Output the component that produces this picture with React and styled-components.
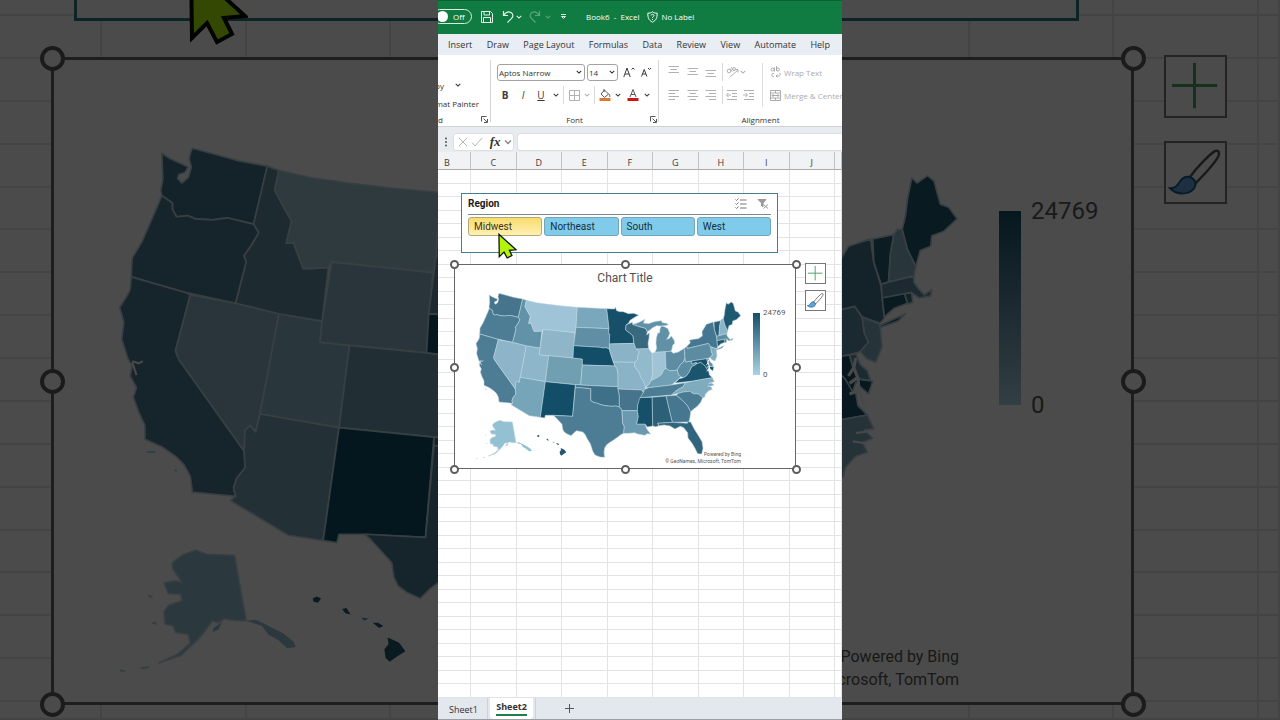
import React from "react";
import styled, { createGlobalStyle, ThemeProvider, css } from "styled-components";

const GlobalStyle = createGlobalStyle`
  *, *::before, *::after { box-sizing: border-box; }
  body { margin: 0; background: #4b4b4b; font-family: "Open Sans", "Noto Sans", sans-serif; color: #333; }
  button, input, select { font: inherit; color: inherit; margin: 0; padding: 0; border: 0; background: none; border-radius: 0; }
  svg { display: block; flex: none; }
`;

/* Sizes of the sheet objects: one set for the sheet, one for the enlarged backdrop. */
const regular = {
  line: 1, frameW: 342, frameH: 205, handle: 9, ring: 2,
  mapX: 5, mapY: 15, mapW: 280, title: 12, titleTop: 5,
  barX: 298, barY: 48, barW: 7, barH: 62, label: 8, labelGap: 3, labelLine: 10,
  credit: 5, creditLine: 7, creditRight: 54, creditBottom: 3,
  toolX: 350, toolY: -2, tool: 21, toolGap: 6, cursor: 19,
};
const enlarged = {
  line: 3, frameW: 1083, frameH: 648, handle: 25, ring: 4,
  mapX: 15, mapY: 46, mapW: 886, title: 38, titleTop: 13,
  barX: 945, barY: 151, barW: 22, barH: 194, label: 24, labelGap: 10, labelLine: 32,
  credit: 16, creditLine: 23, creditRight: 172, creditBottom: 11,
  toolX: 1110, toolY: -5, tool: 63, toolGap: 23, cursor: 60,
};

/* ---------- page ---------- */
const Page = styled.div`
  position: relative;
  display: flex;
  justify-content: center;
  min-height: 100vh;
  overflow: hidden;
`;
const Backdrop = styled.div`
  position: absolute;
  inset: 0;
  background: #fff;
  &::after { content: ""; position: absolute; inset: 0; background: rgba(0, 0, 0, 0.705); }
`;
const BackdropGrid = styled.div`
  display: grid;
  height: 100%;
  grid-template-columns: 102px repeat(8, 1fr) 21px;
  grid-template-rows: 16px repeat(16, 1fr) 18px;
`;
const BackdropCell = styled.div`
  border-right: 2px solid #e6e6e6;
  border-bottom: 2px solid #e6e6e6;
`;
const BackdropSlicer = styled.div`
  position: absolute;
  left: calc(50% - 566px);
  top: calc(50% - 528px);
  width: 1005px;
  height: 189px;
  border: 3px solid #2f7a86;
  background: #fff;
`;
const BackdropSpot = styled.div`
  position: absolute;
  left: calc(50% + ${(p) => p.$x}px);
  top: calc(50% + ${(p) => p.$y}px);
`;
const Window = styled.main`
  position: relative;
  display: flex;
  flex-direction: column;
  height: 100vh;
  aspect-ratio: 101 / 180;
  background: #fff;
  overflow: hidden;
`;

/* ---------- title bar ---------- */
const TitleBar = styled.header`
  display: flex;
  align-items: center;
  height: 34px;
  flex: none;
  padding-bottom: 2px;
  border-top: 1px solid #0b6132;
  background: #107c41;
  color: #fff;
  font-size: 8px;
  font-weight: 500;
  white-space: nowrap;
`;
const Toggle = styled.label`
  display: flex;
  align-items: center;
  gap: 5px;
  width: 40px;
  height: 15px;
  flex: none;
  margin-left: -6px;
  padding-left: 4px;
  border: 1px solid #d9ecdf;
  border-radius: 8px;
  input { appearance: none; width: 11px; height: 11px; border-radius: 50%; background: #fff; }
`;
const TitleButton = styled.button`
  display: flex;
  align-items: center;
  justify-content: center;
  width: ${(p) => p.$w}px;
  height: 20px;
  flex: none;
  color: #e2f2e8;
  opacity: ${(p) => (p.$dim ? 0.35 : 1)};
`;
const FileName = styled.h1`
  margin: 0 8px 0 11px;
  font-size: 8px;
  font-weight: 500;
  white-space: pre;
`;
const LabelButton = styled.button`
  display: flex;
  align-items: center;
  gap: 3px;
`;

/* ---------- ribbon ---------- */
const Tabs = styled.nav`
  display: flex;
  align-items: center;
  justify-content: space-between;
  height: 21px;
  flex: none;
  padding: 0 12px 0 10px;
  background: #e9edf4;
  font-size: 9px;
  white-space: nowrap;
`;
const Tab = styled.a`
  color: #333;
  text-decoration: none;
`;
const Ribbon = styled.section`
  display: flex;
  height: 72px;
  flex: none;
  border-bottom: 1px solid #cfd2d6;
  overflow: hidden;
  font-size: 8px;
`;
const Group = styled.div`
  display: flex;
  flex-direction: column;
  flex: none;
  width: ${(p) => p.$w}px;
  margin-top: 5px;
  margin-bottom: 4px;
  border-right: 1px solid #d4d4d4;
`;
const Controls = styled.div`
  display: flex;
  flex-direction: column;
  flex: none;
  height: 51px;
`;
const Row = styled.div`
  display: flex;
  align-items: center;
  flex: none;
  height: ${(p) => p.$h || 23}px;
  padding-left: ${(p) => p.$pad || 0}px;
`;
const GroupLabel = styled.div`
  position: relative;
  display: flex;
  justify-content: center;
  padding-top: 3px;
  line-height: 11px;
`;
const Launcher = styled.button`
  position: absolute;
  right: ${(p) => p.$r}px;
  top: 5px;
`;
const ClippedButton = styled.button`
  display: flex;
  justify-content: flex-end;
  width: ${(p) => p.$w}px;
  margin-right: 11px;
  white-space: nowrap;
`;
const ClippedLabel = styled.span`
  display: flex;
  justify-content: flex-end;
  width: 5px;
  margin-right: auto;
`;
const Tool = styled.button`
  display: flex;
  align-items: center;
  justify-content: center;
  flex: none;
  width: ${(p) => p.$w || 18}px;
  height: 18px;
  font-size: 10px;
  color: ${(p) => (p.$off ? "#b1b1b1" : "#3a3a3a")};
`;
const WideTool = styled.button`
  display: flex;
  align-items: center;
  gap: 3px;
  flex: none;
  margin-left: 4px;
  color: #ababab;
  white-space: nowrap;
`;
const Divider = styled.span`
  flex: none;
  width: 1px;
  height: 18px;
  margin: 0 2px;
  background: #d9d9d9;
`;
const AlignBody = styled.div`
  display: flex;
`;
const AlignPart = styled.div`
  display: flex;
  flex-direction: column;
  flex: none;
`;
const TallDivider = styled.span`
  width: 1px;
  height: 44px;
  margin: 3px 0 0 3px;
  background: #dcdcdc;
`;
const Picker = styled.span`
  position: relative;
  display: flex;
  align-items: center;
  width: ${(p) => p.$w}px;
  height: 17px;
  margin-right: 2px;
  border: 1px solid #a2a2a2;
  border-radius: 3px;
  select { appearance: none; width: 100%; height: 15px; padding-left: 1px; font-size: 8px; }
  svg { position: absolute; right: 2px; pointer-events: none; }
`;

/* ---------- formula bar ---------- */
const FormulaBar = styled.section`
  display: flex;
  align-items: center;
  height: 25px;
  flex: none;
  padding: 5px 0 1px 6px;
  background: #e8ebf0;
`;
const FormulaTools = styled.div`
  display: flex;
  align-items: center;
  justify-content: space-between;
  width: 61px;
  height: 18px;
  margin: 0 3px 0 5px;
  padding: 0 1px 0 4px;
  border: 1px solid #dcdfe4;
  border-radius: 3px;
  background: #fff;
`;
const FxButton = styled.button`
  padding-left: 3px;
  font: italic bold 13px "Liberation Serif", serif;
`;
const FormulaInput = styled.input`
  flex: 1;
  min-width: 0;
  height: 18px;
  border: 1px solid #dcdfe4;
  border-right: 0;
  border-radius: 3px 0 0 3px;
  background: #fff;
`;

/* ---------- sheet ---------- */
const SheetArea = styled.section`
  position: relative;
  flex: 1;
  min-height: 0;
`;
const Cells = styled.table`
  display: grid;
  height: 100%;
  grid-template-columns: 33px repeat(8, 1fr) 7px;
  grid-template-rows: 18px repeat(39, 1fr);
  thead, tbody, tr { display: contents; }
  th {
    overflow: hidden;
    padding: 4px 0 0;
    border-right: 1px solid #bfc1c3;
    border-bottom: 1px solid #a9abad;
    background: #f1f2f3;
    font-size: 9px;
    font-weight: 500;
    line-height: 13px;
    color: #3b3b3b;
  }
  th:first-child { padding-right: 14px; }
  td { padding: 0; border-right: 1px solid #e2e3e4; border-bottom: 1px solid #e2e3e4; }
`;
const Floating = styled.div`
  position: absolute;
  left: ${(p) => p.$x}px;
  top: ${(p) => p.$y}px;
`;
const Slicer = styled.section`
  width: 317px;
  height: 60px;
  padding: 4px 6px;
  border: 1px solid #43808f;
  background: #fff;
  font-family: Roboto, sans-serif;
  font-size: 10px;
`;
const SlicerHead = styled.div`
  display: flex;
  align-items: center;
  gap: 10px;
  height: 17px;
  margin-bottom: 2px;
  padding: 0 2px 5px 0;
  border-bottom: 1px solid #7a8a8a;
`;
const SlicerTitle = styled.h2`
  flex: 1;
  margin: 0;
  font-size: 10px;
  font-weight: 700;
  color: #1b1b1b;
`;
const SlicerItems = styled.div`
  display: grid;
  grid-template-columns: repeat(4, 1fr);
  gap: 2px;
`;
const SlicerItem = styled.button`
  height: 19px;
  padding-left: 5px;
  border: 1px solid #6fa5bd;
  border-radius: 3px;
  background: #80cbea;
  color: #14303c;
  text-align: left;
  ${(p) =>
    p.$active &&
    css`
      border-color: #b5a878;
      background: linear-gradient(#f9dc6c, #fff0b4);
      color: #3c3316;
    `}
`;

/* ---------- chart ---------- */
const Frame = styled.figure`
  position: relative;
  width: ${(p) => p.theme.frameW}px;
  height: ${(p) => p.theme.frameH}px;
  margin: 0;
  border: ${(p) => p.theme.line}px solid #666;
  background: #fff;
  font-family: Roboto, sans-serif;
`;
const ChartTitle = styled.figcaption`
  padding-top: ${(p) => p.theme.titleTop}px;
  font-size: ${(p) => p.theme.title}px;
  line-height: 16px;
  text-align: center;
  color: #505050;
`;
const MapPlace = styled.div`
  position: absolute;
  left: ${(p) => p.theme.mapX}px;
  top: ${(p) => p.theme.mapY}px;
  width: ${(p) => p.theme.mapW}px;
  svg { width: 100%; height: auto; }
`;
const Legend = styled.div`
  position: absolute;
  left: ${(p) => p.theme.barX}px;
  top: ${(p) => p.theme.barY}px;
  display: flex;
  gap: ${(p) => p.theme.labelGap}px;
  height: ${(p) => p.theme.barH}px;
  font-size: ${(p) => p.theme.label}px;
  line-height: ${(p) => p.theme.labelLine}px;
  color: #595959;
`;
const LegendBar = styled.div`
  width: ${(p) => p.theme.barW}px;
  background: linear-gradient(#154f68, #a9d3e6);
`;
const LegendLabels = styled.div`
  display: flex;
  flex-direction: column;
  justify-content: space-between;
  margin: -${(p) => p.theme.labelLine / 2}px 0;
`;
const Credit = styled.small`
  position: absolute;
  right: ${(p) => p.theme.creditRight}px;
  bottom: ${(p) => p.theme.creditBottom}px;
  font-size: ${(p) => p.theme.credit}px;
  line-height: ${(p) => p.theme.creditLine}px;
  text-align: right;
  color: #555;
`;
const Handles = styled.div`
  position: absolute;
  inset: -${(p) => Math.ceil(p.theme.line / 2)}px;
  pointer-events: none;
`;
const Handle = styled.span`
  position: absolute;
  left: ${(p) => p.$x}%;
  top: ${(p) => p.$y}%;
  width: ${(p) => p.theme.handle}px;
  height: ${(p) => p.theme.handle}px;
  margin: -${(p) => Math.floor(p.theme.handle / 2)}px;
  border: ${(p) => p.theme.ring}px solid #5c5c5c;
  border-radius: 50%;
  background: #fff;
`;
const ChartTools = styled.div`
  position: absolute;
  left: ${(p) => p.theme.toolX}px;
  top: ${(p) => p.theme.toolY}px;
  display: flex;
  flex-direction: column;
  gap: ${(p) => p.theme.toolGap}px;
`;
const ChartTool = styled.button`
  width: ${(p) => p.theme.tool}px;
  height: ${(p) => p.theme.tool}px;
  border: ${(p) => Math.min(p.theme.line, 2)}px solid #777;
  background: #fff;
  svg { width: 100%; height: 100%; }
`;
const CursorArt = styled.svg`
  width: ${(p) => p.theme.cursor}px;
  height: auto;
`;

/* ---------- sheet tabs ---------- */
const SheetBar = styled.nav`
  display: flex;
  align-items: stretch;
  height: 22px;
  flex: none;
  border-bottom: 1px solid #9b9ea2;
  background: #e3e7ee;
  font-size: 9px;
`;
const SheetTab = styled.button`
  width: 50px;
  padding: 2px 0 0 2px;
  border-right: 1px solid #cdd1d8;
`;
const ActiveTab = styled.button`
  width: 43px;
  margin: 0 2px;
  padding-bottom: 1px;
  border-radius: 0 0 4px 4px;
  background: #fff;
  font-weight: 700;
  span { display: inline-block; line-height: 14px; border-bottom: 2px solid #1d7f49; }
`;
const AddSheet = styled.button`
  display: flex;
  align-items: center;
  padding-left: 29px;
  border-left: 1px solid #cdd1d8;
`;

/* State outlines as [fill, points]. */
const states = [
  ["#45748c", "88,45 96,50 109,56 113,58 110,63 104,65 103,69 107,73 113,68 116,58 114,50 115,45 117,40 139,46 161,52 188,57 175,112 150,106 136,108 120,107 113,104 102,105 98,98 98,92 88,85 87,80 89,69"],
  ["#4d7d95", "88,85 98,92 98,98 102,105 113,104 120,107 136,108 150,106 175,112 180,120 173,132 166,142 168,148 158,187 111,177 59,162 60,144 69,129 80,104"],
  ["#4d7d95", "59,162 111,177 115,179 101,232 104,240 166,327 167,343 159,353 156,362 158,370 117,366 115,351 109,340 101,332 88,323 72,316 72,303 66,290 61,276 64,267 58,256 60,246 56,240 50,221 52,205 48,191 55,180 58,174"],
  ["#8db4c8", "115,179 158,187 199,197 191,240 181,292 177,309 172,303 167,307 166,327 104,240 101,232"],
  ["#8db6ca", "199,197 240,204 238,224 266,227 256,305 181,292 191,240"],
  ["#76a4b8", "181,292 256,305 241,412 208,407 153,374 158,370 156,362 159,353 167,343 166,327 167,307 172,303 177,309"],
  ["#6292a8", "188,57 199,61 195,80 203,95 211,109 206,130 213,130 222,154 233,154 246,153 240,204 199,197 158,187 168,148 166,142 173,132 180,120 175,112"],
  ["#a0c4d7", "199,61 230,68 265,73 308,78 352,82 348,142 345,158 249,148 246,153 233,154 222,154 213,130 206,130 211,109 203,95 195,80"],
  ["#8fb5c9", "249,148 345,158 339,234 266,227 238,224 240,204"],
  ["#709fb2", "266,227 339,234 367,237 367,255 362,315 346,314 256,305"],
  ["#124e68", "256,305 346,314 338,409 280,406 256,406 254,414 241,412"],
  ["#7aa7bb", "352,82 440,86 444,118 447,146 348,142"],
  ["#5f8ea5", "348,142 447,146 445,157 449,163 449,192 448,207 438,203 430,204 420,202 341,197"],
  ["#124e68", "341,197 420,202 430,204 438,203 448,207 454,228 460,246 465,258 367,255 367,237 339,234"],
  ["#76a5b9", "367,255 465,258 471,265 474,282 474,320 418,318 362,315"],
  ["#3f7089", "346,314 362,315 418,318 474,320 474,327 478,345 478,381 468,378 452,379 440,377 430,376 420,373 410,369 403,368 392,362 392,326 346,322"],
  ["#4d7d95", "346,322 392,326 392,362 403,368 410,369 420,373 430,376 440,377 452,379 468,378 478,381 483,385 486,392 488,430 493,440 491,460 481,465 475,470 462,479 450,487 440,494 434,504 432,517 434,532 420,531 405,525 398,513 391,491 382,477 375,463 368,456 350,452 342,458 333,467 320,461 312,455 308,447 306,433 295,421 286,411 280,406 338,409"],
  ["#154f68", "440,86 464,87 466,81 470,92 480,95 490,95 505,101 520,100 536,105 522,113 510,121 506,129 498,135 497,150 508,158 519,168 522,190 448,192 449,163 445,157 447,146 444,118"],
  ["#8ab3c8", "448,192 522,190 528,205 538,215 533,229 533,238 525,247 460,246 454,228 448,207"],
  ["#8ab3c8", "460,246 525,247 523,258 534,274 540,282 541,291 548,299 556,316 555,328 550,338 545,330 474,327 474,282 471,265 465,258"],
  ["#45748c", "474,327 545,330 550,338 541,358 533,375 532,392 486,392 483,385 478,381 478,345"],
  ["#6b9ab0", "486,392 532,392 535,410 530,432 555,432 558,441 563,451 572,462 562,461 554,466 545,464 533,462 524,458 508,460 491,460 493,440 488,430"],
  ["#38697f", "498,135 506,131 517,127 518,133 535,139 557,145 562,155 560,165 568,158 567,175 564,190 566,206 528,207 522,190 519,168 508,158 497,150"],
  ["#6191a7", "518,133 530,130 541,125 555,118 550,129 565,131 580,126 590,124 604,122 607,128 620,130 625,135 610,137 600,138 590,137 578,143 570,150 562,155 557,145 535,139"],
  ["#6191a7", "600,147 604,138 613,140 624,146 629,160 625,170 620,178 627,176 634,168 642,180 644,190 638,196 636,206 633,214 616,215 585,217 590,205 588,190 589,175 593,160 599,158"],
  ["#92bacd", "528,207 566,206 576,220 578,280 573,302 568,312 556,320 548,299 541,291 540,282 534,274 523,258 525,247 533,238 533,229 538,215"],
  ["#a0c4d6", "576,220 585,217 616,215 618,265 611,270 605,283 595,291 585,296 573,302 578,280"],
  ["#5d8ca3", "616,215 633,214 640,220 655,216 673,205 675,234 670,246 660,255 652,270 640,272 628,272 618,265"],
  ["#71a0b4", "556,322 568,312 573,302 585,296 595,291 605,283 611,270 618,265 628,272 640,272 652,270 656,285 663,290 645,307 634,315 566,323"],
  ["#4d7d95", "554,328 566,323 634,315 676,308 670,320 655,328 645,335 635,345 540,353 550,338"],
  ["#5c8ca2", "675,234 676,246 695,243 696,252 708,247 715,242 704,256 695,260 688,276 680,287 670,293 663,290 656,285 652,270 660,255 670,246"],
  ["#1a546d", "645,309 658,296 670,293 680,287 688,276 695,260 704,256 712,250 722,247 732,254 740,264 746,273 748,284 757,293 700,303"],
  ["#5c8ca2", "673,205 681,199 682,205 745,190 752,200 754,215 758,224 750,233 740,236 676,246 675,234"],
  ["#457790", "681,199 691,188 688,181 700,178 715,176 727,168 726,155 739,133 760,126 763,148 770,171 773,201 769,206 752,200 745,190 682,205"],
  ["#82aec2", "752,200 769,207 770,220 771,228 765,243 757,240 750,233 758,224 754,215"],
  ["#2a5f77", "793,197 769,208 769,210 786,204"],
  ["#2a5f77", "762,126 782,122 779,139 777,167 770,169 763,148"],
  ["#8ab5c9", "782,122 785,117 790,117 795,136 803,152 801,161 777,167 779,139"],
  ["#1f5971", "790,117 793,104 795,88 799,68 804,73 814,66 820,71 826,93 834,96 842,107 829,119 818,123 817,133 807,137 803,152 795,136"],
  ["#5d8da3", "770,169 777,167 801,161 801,167 806,174 811,179 818,174 817,180 806,182 799,177 771,182"],
  ["#457790", "792,178 799,177 800,186 795,188"],
  ["#1f5971", "771,182 792,178 795,187 782,192 773,200"],
  ["#154f68", "695,243 740,236 744,250 749,259 762,261 758,273 752,268 746,262 743,271 736,259 731,254 722,247 712,250 708,247 696,252"],
  ["#6191a7", "740,236 746,235 750,245 757,251 760,260 749,259 744,250"],
  ["#7fabbf", "676,308 700,303 757,293 763,306 754,307 762,315 752,319 757,328 746,332 736,343 734,352 726,353 715,342 700,341 690,334 670,336 655,340 635,345 645,335 655,328 670,320"],
  ["#4a7b93", "649,346 655,340 670,336 690,334 700,341 715,342 728,353 722,367 712,379 700,388 692,395 682,377 670,364"],
  ["#457790", "618,348 649,346 670,364 682,377 692,395 690,412 686,429 682,426 637,427 630,400"],
  ["#2c6078", "576,352 618,348 630,400 637,427 593,430 596,438 587,440 578,438"],
  ["#154f68", "540,353 576,352 578,438 562,441 555,432 530,432 535,410 532,392 533,375"],
  ["#32657d", "593,430 637,427 682,430 683,425 692,426 704,449 716,468 726,485 729,505 725,522 713,521 704,503 695,488 684,474 683,458 671,443 661,439 645,447 630,438 612,435 597,437"],
  ["#93c0d2", "120,421 131,425 157,426 168,488 158,488 148,486 141,490 136,488 128,499 123,505 106,521 85,528 104,519 115,509 113,501 101,499 99,493 91,491 90,479 95,473 107,469 106,463 94,462 90,452 101,450 107,452 98,438 98,433 107,426"],
  ["#93c0d2", "168,488 177,487 186,491 195,496 203,500 213,508 215,513 207,514 198,506 189,501 183,493"],
  ["#93c0d2", "137,495 145,489 142,496 136,499"],
  ["#235a70", "302,504 307,506 313,509 319,517 311,522 304,527 300,523 299,515 303,510"],
  ["#235a70", "288,490 293,490 298,493 294,495"],
  ["#235a70", "259,477 263,476 267,482 262,481"],
  ["#235a70", "231,467 235,465 239,467 236,471 232,470"],
  ["#6191a7", "277,485 284,486 280,488"],
];

function UsMap() {
  return (
    <svg viewBox="0 0 840 570" overflow="visible" role="img" aria-label="Map of the United States by state">
      {states.map(([fill, points], i) => (
        <polygon key={i} points={points} fill={fill} stroke={i > 50 ? "none" : "#bdd5e0"} strokeWidth="1.6" strokeLinejoin="round" />
      ))}
      <path d="M746 239l-2 9 4 10 1 12 5 14M744 248l-5 8M747 258l-7 5M749 270l-9 3" fill="none" stroke="#eef5f8" strokeWidth="3" />
      <path d="M60 242l6 2 4-2M60 243l4 12" fill="none" stroke="#eef5f8" strokeWidth="2" />
      <path d="M762 308l-16 2M757 320l-14-2" fill="none" stroke="#eef5f8" strokeWidth="2" />
      <path d="M75 464l4 2M79 490l4 1M48 535l5 1M68 533l8-1M74 328h8M100 345l2 1" fill="none" stroke="#b9d5e1" strokeWidth="2" />
    </svg>
  );
}

const handleSpots = [[0, 0], [50, 0], [100, 0], [0, 50], [100, 50], [0, 100], [50, 100], [100, 100]];

function MapChart({ title }) {
  return (
    <Frame>
      {title && <ChartTitle>{title}</ChartTitle>}
      <MapPlace><UsMap /></MapPlace>
      <Legend>
        <LegendBar />
        <LegendLabels><span>24769</span><span>0</span></LegendLabels>
      </Legend>
      <Credit>Powered by Bing<br />© GeoNames, Microsoft, TomTom</Credit>
      <Handles>
        {handleSpots.map(([x, y]) => <Handle key={`${x}-${y}`} $x={x} $y={y} />)}
      </Handles>
      <ChartTools>
        <ChartTool aria-label="Chart Elements">
          <svg viewBox="0 0 60 60"><path d="M29 6v46M6 29h46" stroke="#4aa564" strokeWidth="3" fill="none" /></svg>
        </ChartTool>
        <ChartTool aria-label="Chart Styles">
          <svg viewBox="0 0 60 60">
            <path d="M24 35C32 24 45 11 50 8c4-1 5 2 3 6-5 9-14 18-23 27z" fill="#fff" stroke="#555" strokeWidth="2.5" />
            <path d="M4 46c7 0 8-4 11-8 4-5 10-5 14 0 3 6-2 12-9 13-6 1-12-1-16-5z" fill="#5fa3dc" stroke="#1c5c94" strokeWidth="2" />
          </svg>
        </ChartTool>
      </ChartTools>
    </Frame>
  );
}

function Cursor() {
  return (
    <CursorArt viewBox="0 0 60 82" aria-hidden="true">
      <polygon points="3,4 4,75 19,60 29,79 44,71 36,55 57,53" fill="#b2f40c" stroke="#0a0f00" strokeWidth="4" />
    </CursorArt>
  );
}

/* ---------- small icons ---------- */
const Chevron = ({ size = 6, color = "currentColor" }) => (
  <svg width={size} height={size} viewBox="0 0 8 8"><path d="M1 2.5l3 3 3-3" fill="none" stroke={color} strokeWidth="1.4" /></svg>
);
const Lines = ({ rows, y = 0 }) => (
  <svg width="12" height="14" viewBox="0 0 12 14">
    {rows.map(([a, b], i) => <path key={i} d={`M${a} ${y + 2.5 + i * 3}H${b}`} stroke="currentColor" />)}
  </svg>
);
const Indent = ({ flip }) => (
  <svg width="12" height="12" viewBox="0 0 12 12" fill="none" stroke="currentColor">
    <path d="M1 1.5h10M6 4.5h5M6 7.5h5M1 10.5h10" />
    <path d={flip ? "M0 6h4M2.5 4l2 2-2 2" : "M5 6H1M2.5 4l-2 2 2 2"} />
  </svg>
);
const LauncherIcon = () => (
  <svg width="7" height="7" viewBox="0 0 7 7" fill="none" stroke="#555"><path d="M.5 5.500V.5h5M2.500 2.500l3.500 3.500M6.500 3v3.500H3" /></svg>
);

const fullRow = [0.5, 11];
const columns = ["B", "C", "D", "E", "F", "G", "H", "I", "J", ""];
const tabs = ["Insert", "Draw", "Page Layout", "Formulas", "Data", "Review", "View", "Automate", "Help"];
const regions = ["Midwest", "Northeast", "South", "West"];

function ExcelTitle() {
  return (
    <TitleBar>
      <Toggle><input type="checkbox" role="switch" />Off</Toggle>
      <TitleButton $w={30} aria-label="Save">
        <svg width="12" height="12" viewBox="0 0 12 12" fill="none" stroke="currentColor"><path d="M.5.5h9l2 2v9H.5zM3 .5V4h5.500V.5M2.500 11.500V6.500h7v5" /></svg>
      </TitleButton>
      <TitleButton $w={11} aria-label="Undo">
        <svg width="12" height="13" viewBox="0 0 12 13" fill="none" stroke="currentColor" strokeWidth="1.200"><path d="M1.500 1v4.500H6M1.800 5.200C4 2 7 1.400 9 2.600c2.500 1.600 2.300 4 .6 5.800L5.500 12.500" /></svg>
      </TitleButton>
      <TitleButton $w={12} aria-label="Undo history"><Chevron /></TitleButton>
      <TitleButton $w={20} $dim aria-label="Redo">
        <svg width="12" height="13" viewBox="0 0 12 13" fill="none" stroke="currentColor" strokeWidth="1.200"><path d="M10.500 1v4.500H6M10.200 5.200C8 2 5 1.400 3 2.600.5 4.200.7 6.600 2.400 8.400l4.100 4.100" /></svg>
      </TitleButton>
      <TitleButton $w={6} $dim aria-label="Redo history"><Chevron /></TitleButton>
      <TitleButton $w={24} aria-label="Customize Quick Access Toolbar">
        <svg width="7" height="7" viewBox="0 0 7 7" fill="none" stroke="currentColor"><path d="M1 1.500h5M1.500 3.500h4l-2 2z" /></svg>
      </TitleButton>
      <FileName>{"Book6  -  Excel"}</FileName>
      <LabelButton>
        <svg width="11" height="12" viewBox="0 0 11 12" fill="none" stroke="currentColor"><path d="M5.500.8C4 2 2.500 2.200.8 2.200c0 4.500 1 7.200 4.700 9 3.700-1.800 4.700-4.500 4.700-9C8.500 2.200 7 2 5.500.8zM4 4.500c.2-1.500 3-1.500 3 0C7 5.500 5.500 5.600 5.500 7M5.500 8v1" /></svg>
        No Label
      </LabelButton>
    </TitleBar>
  );
}

function ExcelRibbon() {
  return (
    <Ribbon>
      <Group $w={53}>
        <Controls>
          <Row $h={16} />
          <Row $h={18}><ClippedButton $w={6}>Copy</ClippedButton><Chevron /></Row>
          <Row $h={18}><ClippedButton $w={41}>Format Painter</ClippedButton></Row>
        </Controls>
        <GroupLabel><ClippedLabel>Clipboard</ClippedLabel><Launcher $r={2} aria-label="Clipboard settings"><LauncherIcon /></Launcher></GroupLabel>
      </Group>
      <Group $w={168}>
        <Controls>
          <Row $h={24} $pad={6}>
            <Picker $w={88}><select aria-label="Font"><option>Aptos Narrow</option></select><Chevron /></Picker>
            <Picker $w={31}><select aria-label="Font size"><option>14</option></select><Chevron /></Picker>
            <Tool $w={17} aria-label="Increase Font Size">
              <svg width="12" height="12" viewBox="0 0 12 12" fill="none" stroke="currentColor"><path d="M.8 11L4 2l3.200 9M2 8h4M8.500 3.500L10 2l1.500 1.500" /></svg>
            </Tool>
            <Tool aria-label="Decrease Font Size">
              <svg width="12" height="12" viewBox="0 0 12 12" fill="none" stroke="currentColor"><path d="M1.500 10.500L4.200 3.500l2.700 7M2.500 8h3.500M8 2l1.500 1.500L11 2" /></svg>
            </Tool>
          </Row>
          <Row $h={22} $pad={5}>
            <Tool aria-label="Bold"><b>B</b></Tool>
            <Tool aria-label="Italic"><i>I</i></Tool>
            <Tool aria-label="Underline"><u>U</u></Tool>
            <Tool $w={11} aria-label="Underline options"><Chevron /></Tool>
            <Divider />
            <Tool $w={16} $off aria-label="Borders">
              <svg width="11" height="11" viewBox="0 0 11 11" fill="none" stroke="currentColor"><path d="M.5.5h10v10H.5zM5.500.5v10M.5 5.500h10" /></svg>
            </Tool>
            <Tool $w={10} $off aria-label="Border options"><Chevron /></Tool>
            <Divider />
            <Tool $w={16} aria-label="Fill Color">
              <svg width="12" height="14" viewBox="0 0 12 14" fill="none" stroke="#555"><path d="M5 1v3M5.500 2L9.500 6 5.500 9.500 2 6zM10 6c1 1.500 1 2 .5 3" /><path d="M.5 11.500h11" stroke="#dc7a33" strokeWidth="3" /></svg>
            </Tool>
            <Tool $w={10} aria-label="Fill options"><Chevron /></Tool>
            <Tool $w={20} aria-label="Font Color">
              <svg width="12" height="14" viewBox="0 0 12 14" fill="none" stroke="#555"><path d="M3 9l3-7.500L9 9M4 6.500h4" /><path d="M.5 11.500h11" stroke="#d01313" strokeWidth="3" /></svg>
            </Tool>
            <Tool $w={8} aria-label="Font color options"><Chevron /></Tool>
          </Row>
        </Controls>
        <GroupLabel>Font<Launcher $r={1} aria-label="Font settings"><LauncherIcon /></Launcher></GroupLabel>
      </Group>
      <Group $w={204}>
        <Controls>
          <AlignBody>
            <AlignPart>
              <Row $h={24} $pad={6}>
                <Tool $off aria-label="Top Align"><Lines rows={[fullRow, [2.5, 9], fullRow]} y={-1} /></Tool>
                <Tool $w={19} $off aria-label="Middle Align"><Lines rows={[fullRow, [2.5, 9], fullRow]} y={1} /></Tool>
                <Tool $off aria-label="Bottom Align"><Lines rows={[fullRow, [2.5, 9], fullRow]} y={3} /></Tool>
                <Divider />
                <Tool $w={14} $off aria-label="Orientation">
                  <svg width="13" height="12" viewBox="0 0 13 12" fill="none" stroke="currentColor"><circle cx="3" cy="5" r="1.800" /><path d="M4 2.500l2 3M5 1l3 4M4 11l8-7M9 3.500h3v3" /><circle cx="8" cy="3" r="1.500" /></svg>
                </Tool>
                <Tool $w={8} $off aria-label="Orientation options"><Chevron /></Tool>
              </Row>
              <Row $h={22} $pad={6}>
                <Tool $off aria-label="Align Left"><Lines rows={[fullRow, [0.5, 7], fullRow, [0.5, 7]]} /></Tool>
                <Tool $w={19} $off aria-label="Center"><Lines rows={[fullRow, [2.5, 9], fullRow, [2.5, 9]]} /></Tool>
                <Tool $off aria-label="Align Right"><Lines rows={[fullRow, [4, 11], fullRow, [4, 11]]} /></Tool>
                <Divider />
                <Tool $off $w={14} aria-label="Decrease Indent"><Indent /></Tool>
                <Tool $off $w={20} aria-label="Increase Indent"><Indent flip /></Tool>
              </Row>
            </AlignPart>
            <TallDivider />
            <AlignPart>
              <Row $h={24} $pad={3}>
                <WideTool>
                  <svg width="11" height="12" viewBox="0 0 11 12" fill="none" stroke="currentColor"><circle cx="2.500" cy="3.500" r="1.500" /><path d="M4.500 1.500v4M6.500 0v5" /><circle cx="8" cy="3.500" r="1.500" /><path d="M4 7.500c-3-1-3 4 0 3M6 10h2.500c2.500 0 2-3 .5-3M7.500 8.500L6 10l1.500 1.500" /></svg>
                  Wrap Text
                </WideTool>
              </Row>
              <Row $h={22} $pad={3}>
                <WideTool>
                  <svg width="11" height="11" viewBox="0 0 11 11" fill="none" stroke="currentColor"><path d="M.5.5h10v10H.5zM.5 3h10M.5 8h10M5.500.5V3M5.500 8v2.500M2 5.500h7M3.500 4L2 5.500 3.500 7M7.500 4L9 5.500 7.500 7" /></svg>
                  Merge &amp; Center
                </WideTool>
              </Row>
            </AlignPart>
          </AlignBody>
        </Controls>
        <GroupLabel>Alignment</GroupLabel>
      </Group>
    </Ribbon>
  );
}

function RegionSlicer() {
  return (
    <Slicer>
      <SlicerHead>
        <SlicerTitle>Region</SlicerTitle>
        <button aria-label="Multi-Select">
          <svg width="12" height="11" viewBox="0 0 12 11" fill="none" stroke="#777"><path d="M.5 1.500l1 1 2-2M.5 5.500l1 1 2-2M.5 9.500l1 1 2-2M5 2h6.500M5 6h6.500M5 10h6.500" /></svg>
        </button>
        <button aria-label="Clear Filter">
          <svg width="12" height="12" viewBox="0 0 12 12" fill="#999" stroke="#999"><path d="M1 1.500h8L6 5v4L4.500 7.500V5z" /><path d="M6.500 6.500l4.500 4M11 6.500l-4.500 4" fill="none" /></svg>
        </button>
      </SlicerHead>
      <SlicerItems>
        {regions.map((r) => <SlicerItem key={r} $active={r === "Midwest"} aria-pressed={r === "Midwest"}>{r}</SlicerItem>)}
      </SlicerItems>
    </Slicer>
  );
}

export default function App() {
  return (
    <Page>
      <GlobalStyle />
      <ThemeProvider theme={enlarged}>
        <Backdrop aria-hidden="true" inert>
          <BackdropGrid>
            {Array.from({ length: 180 }, (_, i) => <BackdropCell key={i} />)}
          </BackdropGrid>
          <BackdropSlicer />
          <BackdropSpot $x={-589} $y={-303}><MapChart /></BackdropSpot>
          <BackdropSpot $x={-452} $y={-397}><Cursor /></BackdropSpot>
        </Backdrop>
      </ThemeProvider>
      <ThemeProvider theme={regular}>
        <Window>
          <ExcelTitle />
          <Tabs aria-label="Ribbon tabs">
            {tabs.map((t) => <Tab key={t} href="#">{t}</Tab>)}
          </Tabs>
          <ExcelRibbon />
          <FormulaBar>
            <svg width="4" height="10" viewBox="0 0 4 10" fill="#555"><circle cx="2" cy="1.500" r="1" /><circle cx="2" cy="5" r="1" /><circle cx="2" cy="8.500" r="1" /></svg>
            <FormulaTools>
              <button aria-label="Cancel"><svg width="10" height="10" viewBox="0 0 10 10" stroke="#b5b5b5"><path d="M1 1l8 8M9 1L1 9" /></svg></button>
              <button aria-label="Enter"><svg width="12" height="10" viewBox="0 0 12 10" fill="none" stroke="#b5b5b5"><path d="M1 5.500L4 9l7-8" /></svg></button>
              <FxButton aria-label="Insert Function">fx</FxButton>
              <Chevron size={8} color="#888" />
            </FormulaTools>
            <FormulaInput aria-label="Formula bar" />
          </FormulaBar>
          <SheetArea>
            <Cells>
              <thead><tr>{columns.map((c, i) => <th key={i} scope="col">{c}</th>)}</tr></thead>
              <tbody>
                {Array.from({ length: 39 }, (_, r) => <tr key={r}>{columns.map((c, i) => <td key={i} />)}</tr>)}
              </tbody>
            </Cells>
            <Floating $x={23} $y={41}><RegionSlicer /></Floating>
            <Floating $x={16} $y={112}><MapChart title="Chart Title" /></Floating>
            <Floating $x={60} $y={81}><Cursor /></Floating>
          </SheetArea>
          <SheetBar aria-label="Sheets">
            <SheetTab>Sheet1</SheetTab>
            <ActiveTab><span>Sheet2</span></ActiveTab>
            <AddSheet aria-label="New sheet">
              <svg width="9" height="9" viewBox="0 0 9 9" stroke="#555"><path d="M4.500 0v9M0 4.500h9" /></svg>
            </AddSheet>
          </SheetBar>
        </Window>
      </ThemeProvider>
    </Page>
  );
}
